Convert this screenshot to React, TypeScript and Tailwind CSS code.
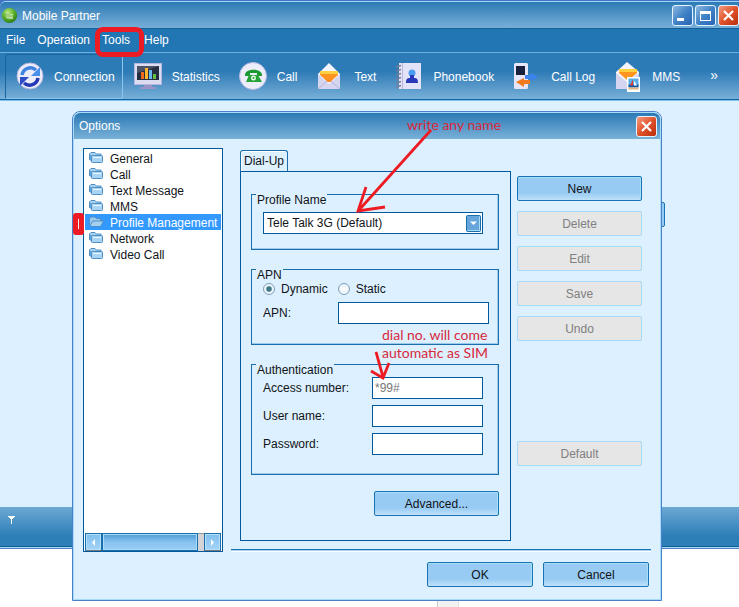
import type { ReactNode } from 'react';
import clsx from 'clsx';

export default function App() {
  return (
    <div className="relative min-h-screen bg-white font-['Liberation_Sans',Arial,sans-serif] text-[12px] leading-4 text-[#101418] select-none overflow-hidden">
      <header className="bg-[#4472c4] pt-px text-white">
        <TitleBar />
        <MenuBar />
        <ToolBar />
      </header>
      <main className="flex h-[406px] justify-end bg-[#ddf0ff] pt-[101px] pr-[74px]">
        <div className="h-[25px] w-[125px] rounded-[2px] border border-[#1a74b4] bg-[#98cbf3]" />
      </main>
      <footer className="flex h-[42px] items-start border-b border-[#4d82c6] bg-linear-to-b from-[#6ba9d4] to-[#2d7fb8] to-70% px-2 pt-[9px] shadow-[inset_0_-1px_#a8dcf7,inset_0_-2px_#145d95]">
        <svg width="7" height="8" viewBox="0 0 7 8" fill="#fff">
          <path d="M0 0h7v1H6v1H5v1H4v5H3V3H2V2H1V1H0z" />
        </svg>
      </footer>
      <OptionsDialog />
      <div className="absolute top-[601px] left-[437px] h-1.5 w-[22px] border-x border-l-[#ccc] border-r-[#e2e2e2] bg-[#f2f2f2]" />
    </div>
  );
}

function TitleBar() {
  return (
    <div className="flex h-[27px] items-center rounded-tl-[6px] border-t border-[#9fd6f7] bg-linear-to-b from-[#2c7bb5] to-[#76afd8] pt-px pl-px">
      <svg width="17" height="17" viewBox="0 0 17 17">
        <defs>
          <radialGradient id="orb" cx=".4" cy=".3" r=".75">
            <stop offset="0" stopColor="#b5e878" />
            <stop offset=".55" stopColor="#58ad2b" />
            <stop offset="1" stopColor="#27750f" />
          </radialGradient>
        </defs>
        <circle cx="8.5" cy="8.5" r="7.6" fill="url(#orb)" />
        <path d="M5 5l4 1v6l-4-1zM9 7h3v5H9z" fill="#eef9df" opacity=".6" />
        <path d="M5 7h4M5 9h7" stroke="#78b850" />
      </svg>
      <h1 className="ml-1 flex-1">Mobile Partner</h1>
      <div className="flex gap-0.5">
        <WindowButton label="Minimize">
          <path d="M4 12h7v3H4z" fill="#fff" />
        </WindowButton>
        <WindowButton label="Maximize">
          <path d="M4 5h11v10H4zM5 8v6h9V8z" fill="#fff" fillRule="evenodd" />
        </WindowButton>
        <WindowButton label="Close" isClose>
          <path d="M5 5l9 9M14 5l-9 9" stroke="#fff" strokeWidth="2.200" />
        </WindowButton>
      </div>
    </div>
  );
}

function WindowButton({
  label,
  isClose,
  children,
}: {
  label: string;
  isClose?: boolean;
  children: ReactNode;
}) {
  return (
    <button
      aria-label={label}
      className={clsx(
        'size-[21px] shrink-0 rounded-[3px] border border-[#e3f4ff]',
        isClose
          ? 'bg-linear-to-br from-[#f29a7c] via-[#e0522a] to-[#b92c08]'
          : 'bg-linear-to-br from-[#8fb8e2] via-[#3f83c6] to-[#2a63b4]',
      )}
    >
      <svg width="19" height="19" viewBox="0 0 19 19">
        {children}
      </svg>
    </button>
  );
}

function MenuBar() {
  return (
    <nav className="flex h-6 items-center gap-3 border-t border-[#155f99] bg-[#2376b4] pb-0.5 pl-1.5">
      <button>File</button>
      <button>Operation</button>
      <button className="relative">
        Tools
        <span className="absolute -top-[5px] -left-[7px] h-[30px] w-[49px] rounded-[8px] border-5 border-[#ed1c24]" />
      </button>
      <button className="ml-0.5">Help</button>
    </nav>
  );
}

function ToolBar() {
  return (
    <div className="flex h-[49px] items-center border-t border-b border-t-[#6db0dd] border-b-[#7fc4ec] bg-linear-to-b from-[#2d7bb6] from-40% to-[#7ab2da] px-[5px] shadow-[inset_0_-1px_#1263a0]">
      {tools.map((tool, index) => (
        <button
          key={tool.name}
          className={clsx(
            'flex h-[45px] shrink-0 items-center gap-2.5 rounded-[2px] border pr-[7px] pl-[10px]',
            index === 0
              ? 'border-t-[#17649f] border-r-[#8cc6ec] border-b-[#8cc6ec] border-l-[#17649f]'
              : 'border-transparent',
          )}
        >
          <svg width="28" height="30" viewBox="0 0 28 30">
            {tool.icon}
          </svg>
          {tool.name}
        </button>
      ))}
      <button aria-label="More tools" className="ml-auto pr-4 pb-1 text-sm">
        »
      </button>
    </div>
  );
}

function OptionsDialog() {
  return (
    <section className="absolute top-[111px] right-[77px] left-[72px] rounded-t-[8px] border border-[#4a80c8] bg-[#ddf0ff]">
      <div className="rounded-t-[7px] border border-[#a6dcf8]">
        <div className="flex h-[26px] items-center rounded-t-[6px] bg-linear-to-b from-[#2a7ab5] to-[#78b1d8] pr-[3px] pl-[5px] text-white">
          <h2 className="flex-1">Options</h2>
          <WindowButton label="Close options" isClose>
            <path d="M5 5l9 9M14 5l-9 9" stroke="#fff" strokeWidth="2.200" />
          </WindowButton>
        </div>
        <div className="flex gap-2 px-[9px] pt-[9px]">
          <ProfileTree />
          <div className="flex-1 pt-0.5">
            <div className="flex gap-1.5 px-[9px]">
              <DialUpTab />
              <ProfileActions />
            </div>
            <div className="mt-2 h-[3px] border-t border-b border-t-[#1a74b4] border-b-white bg-[#a4d2f2]" />
          </div>
        </div>
        <div className="flex justify-end gap-2.5 pt-2.5 pr-[11px] pb-3">
          <Button className="w-[106px]">OK</Button>
          <Button className="w-[106px]">Cancel</Button>
        </div>
      </div>
      <Notes />
    </section>
  );
}

function ProfileTree() {
  return (
    <div className="flex w-[140px] flex-col justify-between border border-[#00599c] bg-white px-px pt-px">
      <ul>
        {sections.map(name => {
          const isSelected = name === 'Profile Management';
          return (
            <li key={name}>
              <button
                className={clsx(
                  'flex h-4 w-full items-center gap-1.5 pt-px pl-1 whitespace-nowrap',
                  isSelected && 'bg-[#3399ff] text-white',
                )}
              >
                <FolderIcon isOpen={isSelected} />
                {name}
              </button>
            </li>
          );
        })}
      </ul>
      <div className="flex h-[18px] bg-[#d6d3d6]">
        <ScrollArrow label="Scroll left" d="M9 5v7L6 8.500z" />
        <div className="w-24 border border-[#1a6eac] bg-linear-to-b from-[#4d9ad4] via-[#86c2f0] to-[#9ccdf4] shadow-[inset_0_0_0_1px_#a9dcf8]" />
        <div className="flex-1 border-t border-[#999]" />
        <ScrollArrow label="Scroll right" d="M6 5v7l3-3.500z" />
      </div>
    </div>
  );
}

function ScrollArrow({ label, d }: { label: string; d: string }) {
  return (
    <button
      aria-label={label}
      className="w-[17px] border border-[#1a6eac] border-b-[#777] bg-linear-to-b from-[#7fbfee] to-[#a5d4f7] shadow-[inset_0_0_0_1px_#b5e2fa]"
    >
      <svg width="15" height="16" viewBox="0 0 15 16">
        <path d={d} fill="#fff" />
      </svg>
    </button>
  );
}

function FolderIcon({ isOpen }: { isOpen: boolean }) {
  return (
    <svg
      width="15"
      height="12"
      viewBox="0 0 15 12"
      stroke="#4d8fc4"
      className="mb-0.5 shrink-0"
    >
      {isOpen ? (
        <>
          <path d="M.5 9V2.500L2 1h4l1.500 1.500h4V5" fill="#9ac8ea" />
          <path d="M1 9.500L4 5h10.500l-3 5.500h-9z" fill="#a6d0f0" />
        </>
      ) : (
        <>
          <path d="M.5 8V2L2 .5h4L7.500 2H12v2" fill="#a9d2f0" />
          <path d="M1 3h2v7H2L1 8z" fill="#6ba7d6" stroke="none" />
          <rect x="2.500" y="3.500" width="11" height="7" rx="1" fill="#a9d5f5" />
          <path d="M4 5.500h8" stroke="#e9f6ff" />
        </>
      )}
    </svg>
  );
}

function DialUpTab() {
  return (
    <div className="flex-1">
      <button className="block h-[21px] w-12 rounded-t-[3px] border border-b-0 border-[#1a6eac] shadow-[inset_1px_1px_#fff]">
        Dial-Up
      </button>
      <form className="border border-[#00599c] pt-[22px] pr-[11px] pb-6 pl-2.5">
        <Group title="Profile Name" className="h-14">
          <div className="relative w-[220px] pt-1.5">
            <select
              aria-label="Profile Name"
              className="block h-[22px] w-full appearance-none border border-[#00599c] bg-white px-[3px]"
            >
              <option>Tele Talk 3G (Default)</option>
            </select>
            <svg
              width="15"
              height="17"
              viewBox="0 0 15 17"
              className="pointer-events-none absolute right-0.5 bottom-0.5"
            >
              <rect x=".5" y=".5" width="14" height="16" rx="1" fill="#67a6dc" stroke="#1a6eac" />
              <path d="M1.500 15.500h12v-14" fill="none" stroke="#a5dcf8" />
              <path d="M4 6.500h7L7.500 10z" fill="#fff" />
            </svg>
          </div>
        </Group>

        <Group title="APN" className="mt-[19px] h-[76px]">
          <div className="flex gap-2.5">
            <Radio label="Dynamic" isChecked />
            <Radio label="Static" />
          </div>
          <Field label="APN:" className="pt-[5px] pr-[9px]" inputClassName="w-[151px]" />
        </Group>

        <Group title="Authentication" className="mt-[19px] h-[111px]">
          <div className="flex flex-col gap-1.5 pt-px pr-[15px]">
            <Field label="Access number:" value="*99#" />
            <Field label="User name:" />
            <Field label="Password:" />
          </div>
        </Group>

        <Button className="mt-4 ml-auto block w-[125px]">Advanced...</Button>
      </form>
    </div>
  );
}

function Group({
  title,
  className,
  children,
}: {
  title: string;
  className?: string;
  children: ReactNode;
}) {
  return (
    <fieldset
      className={clsx(
        'border border-[#1a6eac] shadow-[inset_-1px_-1px_#9ccbee]',
        className,
      )}
    >
      <legend className="float-left -mt-px ml-1 bg-[#ddf0ff] px-px leading-3">
        {title}
      </legend>
      <div className="clear-both pl-[11px]">{children}</div>
    </fieldset>
  );
}

function Radio({ label, isChecked }: { label: string; isChecked?: boolean }) {
  return (
    <label className="flex items-center gap-1.5">
      <input
        type="radio"
        name="apn-mode"
        defaultChecked={isChecked}
        className="size-3 appearance-none rounded-full border border-[#7c9fb8] bg-radial from-white to-[#e4eef5] checked:bg-radial checked:from-[#3f7a86] checked:from-30% checked:to-[#eef6fb] checked:to-50%"
      />
      {label}
    </label>
  );
}

function Field({
  label,
  value,
  className,
  inputClassName = 'w-[111px]',
}: {
  label: string;
  value?: string;
  className?: string;
  inputClassName?: string;
}) {
  return (
    <label className={clsx('flex items-center justify-between', className)}>
      {label}
      <input
        type={label === 'Password:' ? 'password' : 'text'}
        defaultValue={value}
        className={clsx(
          'h-[22px] border border-[#00599c] bg-white px-0.5 text-[#777]',
          inputClassName,
        )}
      />
    </label>
  );
}

function ProfileActions() {
  return (
    <div className="flex w-[125px] flex-col gap-2.5 pt-[26px]">
      <Button>New</Button>
      <Button isDisabled>Delete</Button>
      <Button isDisabled>Edit</Button>
      <Button isDisabled>Save</Button>
      <Button isDisabled>Undo</Button>
      <Button isDisabled className="mt-[90px]">
        Default
      </Button>
    </div>
  );
}

function Button({
  isDisabled,
  className,
  children,
}: {
  isDisabled?: boolean;
  className?: string;
  children: ReactNode;
}) {
  return (
    <button
      type="button"
      disabled={isDisabled}
      className={clsx(
        'h-[25px] rounded-[2px] border',
        isDisabled
          ? 'border-[#a5dafa] bg-[#e6e6e6] text-[#808080]'
          : 'border-[#1a74b4] bg-linear-to-b from-[#98cbf3] from-70% to-[#c0e2fa] shadow-[inset_-1px_1px_#a5e0f8]',
        className,
      )}
    >
      {children}
    </button>
  );
}

// Hand-drawn hints, positioned over the dialog
function Notes() {
  return (
    <div className="pointer-events-none absolute -top-px -left-px font-[Lato,sans-serif] text-[14px] leading-[18px] text-[#d8283c]">
      <svg
        width="590"
        height="490"
        viewBox="0 0 590 490"
        fill="none"
        stroke="#ed1c24"
        strokeWidth="2.800"
      >
        <path d="M359 19L287 99M294 76l-8 24 27-4" />
        <path d="M304 241l7 25M299 260l12 7 6-15" />
        <rect x="1" y="102" width="11" height="22" rx="3" fill="#ed1c24" stroke="none" />
        <path d="M6.500 108v10" stroke="#fff" strokeWidth="1" />
      </svg>
      <p className="absolute top-[5px] left-[335px] whitespace-nowrap">
        write any name
      </p>
      <p className="absolute top-[215px] left-[310px] whitespace-nowrap">
        dial no. will come
        <br />
        automatic as SIM
      </p>
    </div>
  );
}

const sections = [
  'General',
  'Call',
  'Text Message',
  'MMS',
  'Profile Management',
  'Network',
  'Video Call',
];

const tools = [
  {
    name: 'Connection',
    icon: (
      <>
        <circle cx="14" cy="14" r="13" fill="#ececfa" stroke="#b5b8de" />
        <path d="M6 13a8.500 8.500 0 0 1 14-5" stroke="#3f82e0" strokeWidth="3.500" fill="none" />
        <path d="M24 5v9h-9z" fill="#4a90ea" />
        <path d="M22 16a8.500 8.500 0 0 1-14 5" stroke="#2238b4" strokeWidth="3.500" fill="none" />
        <path d="M4 24v-9h9z" fill="#2c4cc8" />
      </>
    ),
  },
  {
    name: 'Statistics',
    icon: (
      <>
        <path d="M10 23h8v2h4v2H6v-2h4z" fill="#9a94c8" />
        <rect x=".5" y="1.500" width="27" height="21" fill="#dcdcf2" stroke="#b5b5dd" />
        <path d="M3 4h22v14H3z" fill="#252d40" />
        <path d="M3 4h22L3 11z" fill="#4c5366" />
        <path d="M7 10h3v7H7z" fill="#f06a1c" />
        <path d="M11 6h3v11h-3z" fill="#ffb52c" />
        <path d="M15 8h3v9h-3z" fill="#69b7f0" />
        <path d="M19 12h3v5h-3z" fill="#67c13c" />
      </>
    ),
  },
  {
    name: 'Call',
    icon: (
      <>
        <circle cx="14" cy="14" r="13.500" fill="#ededfa" stroke="#b6b9e0" />
        <path d="M6 13c0-7 17-7 17 0v1h-5v-3h-7v3H6z" fill="#1b9a30" />
        <path d="M10 13h9l4 7H7z" fill="#25a237" />
        <circle cx="14.500" cy="16" r="2.500" fill="#e9f7e6" />
        <circle cx="14.500" cy="16" r="1" fill="#25a237" />
      </>
    ),
  },
  {
    name: 'Text',
    icon: (
      <>
        <path d="M2 12L13 1l11 11v15H2z" fill="#f5f5ff" />
        <path d="M2 12l11 10 11-10v15H2z" fill="#d5d5f0" />
        <path d="M2 27l9-8M24 27l-9-8" stroke="#b3b3da" />
        <path d="M4 9h18v4l-8 7h-2l-8-7z" fill="#ff9420" />
        <path d="M4 9h18v3H4z" fill="#ffd040" />
        <path d="M8 16l5 4 5-4-4 4h-2z" fill="#f26a12" />
      </>
    ),
  },
  {
    name: 'Phonebook',
    icon: (
      <>
        <path d="M4 1h22v26H4z" fill="#e3e3f8" />
        <path d="M7 1h1v26H7z" fill="#b8b8dd" />
        <path
          d="M1 5l5-1.500M1 9l5-1.500M1 13l5-1.500M1 17l5-1.500M1 21l5-1.500M1 25l5-1.500"
          stroke="#777b98"
          strokeWidth="1.500"
        />
        <circle cx="17" cy="11" r="3.500" fill="#4b9cf0" />
        <path d="M11 21c0-4 1-5 4-5v-3h4v3c3 0 4 1 4 5z" fill="#2739b8" />
      </>
    ),
  },
  {
    name: 'Call Log',
    icon: (
      <>
        <rect x="1" y="1" width="14" height="26" rx="1.500" fill="#e6e6f8" />
        <path d="M3 4h9v9H3z" fill="#18203c" />
        <path d="M12 13h6v-2l7 4-7 4v-2h-6z" fill="#3b84ef" />
        <path d="M17 18h-6v-2l-8 4 8 5v-3h6z" fill="#f37a1c" />
      </>
    ),
  },
  {
    name: 'MMS',
    icon: (
      <>
        <path d="M2 10L13 0l12 10v17H2z" fill="#f5f5ff" />
        <path d="M2 11l11 9 12-9v16H2z" fill="#d5d5f0" />
        <path d="M5 7h18v4l-8 7h-2l-8-7z" fill="#ff9420" />
        <path d="M5 7h18v3H5z" fill="#ffd040" />
        <path d="M13 15h13v15H13z" fill="#fff" />
        <path d="M14.500 16.500h10v8h-10z" fill="#58aee8" />
        <path d="M14.500 22.500h10v3h-10z" fill="#1959a6" />
        <path d="M19 17.500v6h-3z" fill="#e23b30" />
        <path d="M20 18.500v5h3z" fill="#fff" />
        <path d="M14.500 25.500h10v2h-10z" fill="#e1b77c" />
      </>
    ),
  },
];
